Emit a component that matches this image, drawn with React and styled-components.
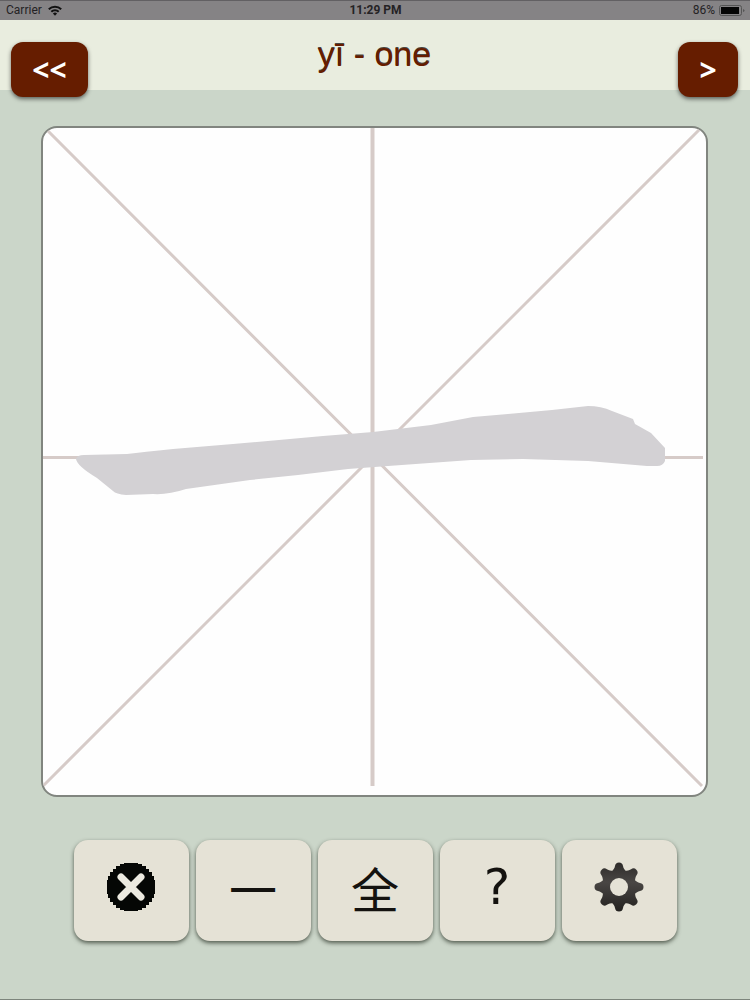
import styled, { createGlobalStyle } from 'styled-components';

const color = {
  page: '#cbd6c9',
  header: '#e9eddf',
  status: '#858385',
  brand: '#661d00',
  key: '#e5e2d6',
  guide: '#d6cbc8',
  stroke: '#d3d1d4',
  ink: '#14120f',
};

const GlobalStyle = createGlobalStyle`
  * {
    box-sizing: border-box;
  }

  body {
    margin: 0;
    background: ${color.page};
    font-family: Roboto, "Liberation Sans", sans-serif;
  }
`;

const Screen = styled.div`
  display: flex;
  flex-direction: column;
  min-height: 100vh;
  background: ${color.page};
  border-bottom: 1px solid #7d857c;
`;

const StatusBar = styled.div`
  display: grid;
  grid-template-columns: 1fr auto 1fr;
  align-items: center;
  height: 20px;
  padding: 0 5px 0 6px;
  border-top: 1px solid #626063;
  background: ${color.status};
  color: #242224;
  font-size: 12px;
  line-height: 19px;
`;

const StatusGroup = styled.div`
  display: flex;
  align-items: center;
  justify-content: ${({ $end }) => ($end ? 'flex-end' : 'flex-start')};
  gap: ${({ $end }) => ($end ? '4px' : '6px')};
`;

const Clock = styled.time`
  font-weight: 700;
`;

const Header = styled.header`
  display: grid;
  grid-template-columns: 1fr auto 1fr;
  align-items: start;
  height: 70px;
  padding: 0 12px 0 11px;
  background: ${color.header};
`;

const Title = styled.h1`
  margin: 0;
  padding-top: 14px;
  color: ${color.brand};
  font-family: "Liberation Sans", Arial, sans-serif;
  font-size: 34px;
  font-weight: 400;
  line-height: 40px;
  text-shadow: 0 -1px 0 #4a4a44;
`;

const NavButton = styled.button`
  justify-self: ${({ $side }) => $side};
  width: ${({ $wide }) => ($wide ? '77px' : '60px')};
  height: 55px;
  margin-top: 22px;
  padding: 0;
  border: 0;
  border-radius: 12px;
  background: ${color.brand};
  box-shadow: 0 2px 4px rgba(0, 0, 0, 0.55);
  color: #fff;
  font-family: "Open Sans", sans-serif;
  font-size: 30px;
  font-weight: 700;
  line-height: 55px;
  cursor: pointer;
`;

const Board = styled.main`
  margin: 36px 42px 0 41px;
  aspect-ratio: 667 / 671;
  overflow: hidden;
  border: 2px solid #81857f;
  border-radius: 16px;
  background: #fefefe;

  svg {
    display: block;
    width: 100%;
    height: 100%;
  }
`;

const Toolbar = styled.nav`
  display: flex;
  justify-content: center;
  gap: 7px;
  padding: 43px 16px 58px;
`;

const Key = styled.button`
  display: flex;
  align-items: center;
  justify-content: center;
  flex: 0 1 115px;
  height: 101px;
  padding: 0 0 8px;
  border: 0;
  border-radius: 14px;
  background: ${color.key};
  box-shadow: 0 2px 4px rgba(40, 48, 36, 0.75);
  color: ${color.ink};
  font-family: "DejaVu Sans", sans-serif;
  font-size: 50px;
  line-height: 60px;
  cursor: pointer;
`;

const Glyph = styled.span`
  font-family: "Noto Sans CJK JP", sans-serif;
  font-size: 48px;
  line-height: 56px;
`;

const WifiIcon = () => (
  <svg width="14" height="11" viewBox="0 0 14 11" aria-hidden="true">
    <g fill="none" stroke="#111" strokeWidth="2">
      <path d="M0.8 4.2a8.8 8.8 0 0 1 12.4 0" />
      <path d="M3.3 6.8a5.2 5.2 0 0 1 7.4 0" />
    </g>
    <path d="M7 10.8L4.9 8.6a3 3 0 0 1 4.2 0z" fill="#111" />
  </svg>
);

const BatteryIcon = () => (
  <svg width="26" height="11" viewBox="0 0 26 11" aria-hidden="true">
    <rect x="0.5" y="0.5" width="22" height="10" rx="2" fill="none" stroke="#555" />
    <rect x="2" y="2" width="18" height="7" fill="#050505" />
    <path d="M24 4v3q1.500-.5 1.500-1.500t-1.500-1.500z" fill="#555" />
  </svg>
);

const ClearIcon = () => (
  <svg width="50" height="50" viewBox="0 0 50 50" aria-hidden="true">
    <path
      d="M18 1h14v1h4v2h4v3h3v3h3v4h2v4h1v14h-1v4h-2v4h-3v3h-3v3h-4v2h-4v1H18v-1h-4v-2h-4v-3H7v-3H4v-4H2v-4H1V18h1v-4h2v-4h3V7h3V4h4V2h4z"
      fill="#050705"
    />
    <path d="M15 15l20 20M35 15L15 35" stroke="#eceae0" strokeWidth="7" strokeLinecap="round" />
  </svg>
);

const teeth = [0, 45, 90, 135, 180, 225, 270, 315];

const GearIcon = () => (
  <svg width="50" height="50" viewBox="-25 -25 50 50" aria-hidden="true">
    <defs>
      <linearGradient id="gear" x1="0" y1="-24" x2="0" y2="24" gradientUnits="userSpaceOnUse">
        <stop offset="0" stopColor="#2e2c2a" />
        <stop offset="0.4" stopColor="#494644" />
        <stop offset="1" stopColor="#242220" />
      </linearGradient>
      <mask id="gear-shape">
        <circle r="17" fill="#fff" />
        {teeth.map((angle) => (
          <path
            key={angle}
            d="M-7.500 -15C-5.500 -17.500 -4.500 -18.500 -4 -21Q-3.500 -24.500 0 -24.500T4 -21C4.500 -18.500 5.500 -17.500 7.500 -15z"
            fill="#fff"
            transform={`rotate(${angle})`}
          />
        ))}
        <circle r="9" fill="#000" />
      </mask>
    </defs>
    <rect x="-25" y="-25" width="50" height="50" fill="url(#gear)" mask="url(#gear-shape)" />
  </svg>
);

// 663 x 667 grid with the stroke outline to trace on top of the guides
const TracingGrid = () => (
  <svg viewBox="0 0 663 667" role="img" aria-label="Stroke outline for one">
    <g stroke={color.guide} fill="none">
      <path d="M329.500 0V658" strokeWidth="4" />
      <path d="M0 329.500H660" strokeWidth="3" />
      <path d="M2 0L659 658M0 658L658 0" strokeWidth="3" />
    </g>
    <path
      d="M33 331Q34 327 41 327L84 326Q100 324 130 321L190 316L280 308L330 304L388 297L430 289L465 286L509 282L545 278Q558 278 569 283L590 291L592 296L608 305L622 320V333Q620 338 614 338H604L545 333L480 331L428 332L345 338L305 341L255 347L207 352L143 361Q125 367 110 366L83 367Q73 366 70 363L54 350Q34 338 33 331z"
      fill={color.stroke}
    />
  </svg>
);

const App = () => (
  <>
    <GlobalStyle />
    <Screen>
      <StatusBar>
        <StatusGroup>
          Carrier
          <WifiIcon />
        </StatusGroup>
        <Clock>11:29 PM</Clock>
        <StatusGroup $end>
          86%
          <BatteryIcon />
        </StatusGroup>
      </StatusBar>
      <Header>
        <NavButton type="button" $side="start" $wide aria-label="Previous">
          &lt;&lt;
        </NavButton>
        <Title>yī - one</Title>
        <NavButton type="button" $side="end" aria-label="Next">
          &gt;
        </NavButton>
      </Header>
      <Board>
        <TracingGrid />
      </Board>
      <Toolbar>
        <Key type="button" aria-label="Clear">
          <ClearIcon />
        </Key>
        <Key type="button">
          <Glyph lang="zh">一</Glyph>
        </Key>
        <Key type="button">
          <Glyph lang="zh">全</Glyph>
        </Key>
        <Key type="button">?</Key>
        <Key type="button" aria-label="Settings">
          <GearIcon />
        </Key>
      </Toolbar>
    </Screen>
  </>
);

export default App;
